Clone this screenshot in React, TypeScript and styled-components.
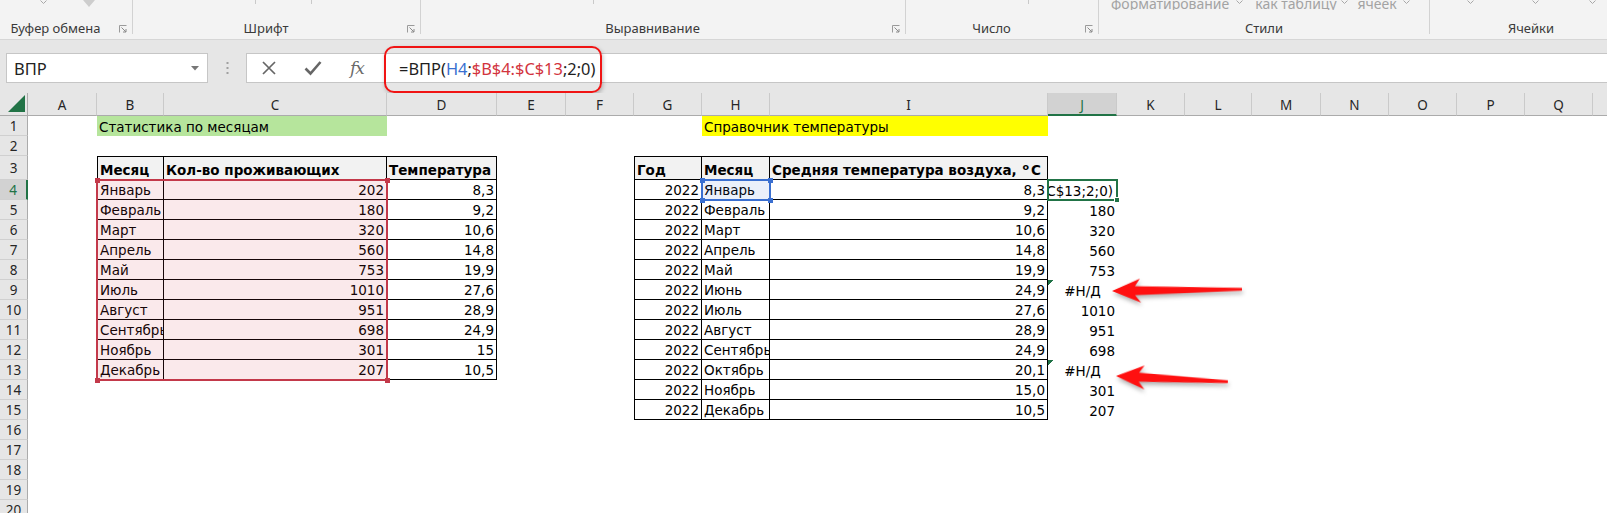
import React from "react";
import styled, { createGlobalStyle, css } from "styled-components";

const UI_FONT = `"Noto Sans", "Open Sans", "DejaVu Sans", sans-serif`;
const CELL_FONT = `"DejaVu Sans", "Noto Sans", sans-serif`;
const GREEN = "#217346";

const COLS = ["A", "B", "C", "D", "E", "F", "G", "H", "I", "J", "K", "L", "M", "N", "O", "P", "Q", "R"];
const COL_W = [69, 67, 223, 110, 69, 68, 68, 68, 278, 69, 68, 67, 69, 68, 68, 68, 68, 68];
const ROW_H = [20, 20, 24, ...Array(17).fill(20)];

const GlobalStyle = createGlobalStyle`
  * { box-sizing: border-box; }
  html, body { margin: 0; padding: 0; background: #ffffff; }
  body { overflow: hidden; font-family: ${UI_FONT}; }
`;

const Page = styled.div`
  width: 1607px;
  height: 513px;
  overflow: hidden;
  display: flex;
  flex-direction: column;
  background: #fff;
`;

/* ---------- Ribbon ---------- */
const Ribbon = styled.div`
  height: 40px;
  flex: none;
  display: flex;
  background: #f3f3f3;
  border-bottom: 1px solid #d6d6d6;
  overflow: hidden;
`;
const Group = styled.div<{ $w: number }>`
  width: ${(p) => p.$w}px;
  flex: none;
  display: flex;
  flex-direction: column;
  justify-content: space-between;
`;
const GroupSep = styled.div`
  width: 1px;
  height: 34px;
  flex: none;
  background: #d2d2d2;
`;
const Fragments = styled.div`
  height: 10px;
  display: flex;
  align-items: flex-start;
  overflow: hidden;
`;
const TopMark = styled.div<{ $ml: number }>`
  margin-left: ${(p) => p.$ml}px;
  width: 1px;
  height: 4px;
  background: #c9c9c9;
  flex: none;
`;
const TopIcon = styled.div<{ $ml: number }>`
  margin-left: ${(p) => p.$ml}px;
  flex: none;
  display: flex;
`;
const TopText = styled.div<{ $ml: number }>`
  margin-left: ${(p) => p.$ml}px;
  align-self: flex-end;
  flex: none;
  font-size: 14px;
  line-height: 12px;
  color: #a3a3a3;
  white-space: nowrap;
`;
const GroupFoot = styled.div`
  height: 19px;
  display: flex;
  align-items: center;
  padding-bottom: 2px;
`;
const GroupLabel = styled.div`
  flex: 1;
  text-align: center;
  font-size: 13px;
  line-height: 17px;
  color: #3a3a3a;
  white-space: nowrap;
`;
const LauncherSlot = styled.div`
  width: 21px;
  flex: none;
  display: flex;
  padding-left: 8px;
`;

const Chevron = () => (
  <svg width="7" height="4" viewBox="0 0 7 4">
    <path d="M0.5 0.5 L3.5 3.5 L6.5 0.5" fill="none" stroke="#a8a8a8" strokeWidth="1" />
  </svg>
);

const Launcher = () => (
  <svg width="8" height="8" viewBox="0 0 8 8">
    <path d="M0.5 7.5V0.5H7.5" fill="none" stroke="#9a9a9a" strokeWidth="1" />
    <path d="M2.5 2.5L7 7M7 4V7H4" fill="none" stroke="#8a8a8a" strokeWidth="1" />
  </svg>
);

/* ---------- Formula bar ---------- */
const FormulaArea = styled.div`
  height: 53px;
  flex: none;
  background: #e6e6e6;
  display: flex;
  align-items: flex-start;
  padding: 13px 0 0 6px;
`;
const NameBox = styled.div`
  width: 202px;
  height: 30px;
  flex: none;
  background: #fff;
  border: 1px solid #c6c6c6;
  display: flex;
  align-items: center;
  justify-content: space-between;
  padding: 0 8px 0 7px;
  font-size: 16.5px;
  color: #222;
`;
const Grip = styled.div`
  width: 38px;
  height: 30px;
  flex: none;
  display: flex;
  align-items: center;
  justify-content: center;
`;
const FormulaBox = styled.div`
  position: relative;
  flex: 1;
  height: 30px;
  background: #fff;
  border: 1px solid #c6c6c6;
  border-right: none;
  display: flex;
  align-items: center;
`;
const BarButton = styled.div`
  width: 44px;
  height: 28px;
  flex: none;
  display: flex;
  align-items: center;
  justify-content: center;
  color: #6a6a6a;
`;
const Fx = styled.span`
  font-family: "DejaVu Serif", "Liberation Serif", serif;
  font-style: italic;
  font-size: 17px;
  color: #6a6a6a;
  letter-spacing: -1px;
`;
const FormulaText = styled.div`
  padding-left: 20px;
  font-size: 16.4px;
  color: #1e1e1e;
  white-space: nowrap;
`;
const Ref = styled.span<{ $c: string }>`
  color: ${(p) => p.$c};
`;
const Callout = styled.div`
  position: absolute;
  left: 137px;
  top: -8px;
  width: 218px;
  height: 47px;
  border: 2.5px solid #f01414;
  border-radius: 10px;
  box-shadow: 1px 2px 4px rgba(0, 0, 0, 0.25);
  pointer-events: none;
`;

/* ---------- Sheet ---------- */
const Sheet = styled.div`
  position: relative;
  flex: 1;
  display: grid;
  grid-template-columns: 28px ${COL_W.map((w) => `${w}px`).join(" ")};
  grid-template-rows: 23px ${ROW_H.map((h) => `${h}px`).join(" ")};
  overflow: hidden;
  background: #fff;
`;
const headBase = css`
  display: flex;
  align-items: center;
  justify-content: center;
  font-family: ${UI_FONT};
  font-size: 13.5px;
  color: #262626;
  background: #e6e6e6;
`;
const Corner = styled.div`
  ${headBase};
  grid-row: 1;
  grid-column: 1;
  border-right: 1px solid #ababab;
  border-bottom: 1px solid #ababab;
  align-items: flex-end;
  justify-content: flex-end;
  padding: 0 2px 3px 0;
`;
const ColHead = styled.div<{ $c: number; $sel?: boolean }>`
  ${headBase};
  grid-row: 1;
  grid-column: ${(p) => p.$c + 2};
  border-right: 1px solid #cacaca;
  border-bottom: 1px solid #ababab;
  padding-top: 2px;
  ${(p) =>
    p.$sel &&
    css`
      background: #d2d2d2;
      color: ${GREEN};
      border-bottom: 2px solid ${GREEN};
    `}
`;
const RowHead = styled.div<{ $r: number; $sel?: boolean }>`
  ${headBase};
  grid-row: ${(p) => p.$r + 1};
  grid-column: 1;
  border-bottom: 1px solid #d0d0d0;
  border-right: 1px solid #ababab;
  ${(p) =>
    p.$sel &&
    css`
      background: #d2d2d2;
      color: ${GREEN};
      border-right: 2px solid ${GREEN};
    `}
`;

type Align = "left" | "right" | "center";
const Cell = styled.div<{
  $r: number;
  $c: number;
  $span?: number;
  $align?: Align;
  $bold?: boolean;
  $fill?: string;
  $box?: boolean;
  $bt?: boolean;
  $bl?: boolean;
  $err?: boolean;
  $padR?: number;
}>`
  grid-row: ${(p) => p.$r + 1};
  grid-column: ${(p) => p.$c + 2} / span ${(p) => p.$span ?? 1};
  display: flex;
  align-items: flex-end;
  justify-content: ${(p) => (p.$align === "right" ? "flex-end" : p.$align === "center" ? "center" : "flex-start")};
  padding: 0 ${(p) => p.$padR ?? 2}px 1px 2px;
  overflow: hidden;
  white-space: nowrap;
  font-family: ${CELL_FONT};
  font-size: 13.5px;
  line-height: 16px;
  font-weight: ${(p) => (p.$bold ? 700 : 400)};
  color: #000;
  background: ${(p) => p.$fill ?? "transparent"};
  ${(p) =>
    p.$box &&
    css`
      border-right: 1px solid #000;
      border-bottom: 1px solid #000;
    `}
  ${(p) => p.$bt && css`border-top: 1px solid #000;`}
  ${(p) => p.$bl && css`border-left: 1px solid #000;`}
  ${(p) =>
    p.$err &&
    css`
      background-image: linear-gradient(135deg, #1e7145 0 4px, transparent 4px);
      background-size: 7px 7px;
      background-repeat: no-repeat;
    `}
`;
const CellText = styled.span`
  flex: none;
  white-space: nowrap;
`;
const Sup = styled.sup`
  font-size: 9.5px;
  vertical-align: 5px;
  line-height: 0;
  margin: 0 2px 0 1px;
`;

const Highlight = styled.div<{ $c1: number; $c2: number; $r1: number; $r2: number; $color: string; $fill: string }>`
  grid-column: ${(p) => p.$c1 + 2} / ${(p) => p.$c2 + 3};
  grid-row: ${(p) => p.$r1 + 1} / ${(p) => p.$r2 + 2};
  margin: -1px;
  position: relative;
  z-index: 2;
  border: 2px solid ${(p) => p.$color};
  background: ${(p) => p.$fill};
  pointer-events: none;
  color: ${(p) => p.$color};
`;
const Handle = styled.div<{ $v: "top" | "bottom"; $h: "left" | "right" }>`
  position: absolute;
  width: 5px;
  height: 5px;
  background: currentColor;
  ${(p) => p.$v}: -3.5px;
  ${(p) => p.$h}: -3.5px;
`;
const ActiveCell = styled.div<{ $c: number; $r: number }>`
  grid-column: ${(p) => p.$c + 2};
  grid-row: ${(p) => p.$r + 1};
  margin: -1px;
  position: relative;
  z-index: 3;
  border: 2px solid ${GREEN};
  pointer-events: none;
`;
const FillHandle = styled.div`
  position: absolute;
  right: -4px;
  bottom: -4px;
  width: 6px;
  height: 6px;
  background: ${GREEN};
  border: 1px solid #fff;
`;
const ArrowSvg = styled.svg<{ $x: number; $y: number; $rot: number }>`
  position: absolute;
  left: ${(p) => p.$x - 1}px;
  top: ${(p) => p.$y - 13}px;
  transform-origin: 1px 13px;
  transform: rotate(${(p) => p.$rot}deg);
  filter: drop-shadow(1px 3px 2px rgba(0, 0, 0, 0.3));
  z-index: 5;
  overflow: visible;
`;

const Arrow = ({ x, y, len, rot }: { x: number; y: number; len: number; rot: number }) => (
  <ArrowSvg $x={x} $y={y} $rot={rot} width={len + 2} height={26} viewBox={`0 0 ${len + 2} 26`}>
    <polygon
      points={`1,13 29,1 24,8.5 ${len},11.6 ${len},14.2 24,17.5 30,25`}
      fill="#ff1010"
    />
  </ArrowSvg>
);

const FORMULA = "=ВПР(H4;$B$4:$C$13;2;0)";

type CellDef = {
  r: number;
  c: number;
  span?: number;
  text: React.ReactNode;
  align?: Align;
  bold?: boolean;
  fill?: string;
  box?: boolean;
  bt?: boolean;
  bl?: boolean;
  err?: boolean;
  padR?: number;
};

function buildCells(): CellDef[] {
  const cells: CellDef[] = [];
  cells.push({ r: 1, c: 1, span: 2, text: "Статистика по месяцам", fill: "#b6e59c" });
  cells.push({ r: 1, c: 7, span: 2, text: "Справочник температуры", fill: "#ffff00" });

  // left table B3:D13
  const head1 = ["Месяц", "Кол-во проживающих", "Температура"];
  head1.forEach((t, i) =>
    cells.push({ r: 3, c: 1 + i, text: t, bold: true, fill: "#f2f2f2", box: true, bt: true, bl: i === 0 })
  );
  const m1 = ["Январь", "Февраль", "Март", "Апрель", "Май", "Июль", "Август", "Сентябрь", "Ноябрь", "Декабрь"];
  const n1 = ["202", "180", "320", "560", "753", "1010", "951", "698", "301", "207"];
  const t1 = ["8,3", "9,2", "10,6", "14,8", "19,9", "27,6", "28,9", "24,9", "15", "10,5"];
  m1.forEach((m, i) => {
    const r = 4 + i;
    cells.push({ r, c: 1, text: m, box: true, bl: true });
    cells.push({ r, c: 2, text: n1[i], align: "right", box: true });
    cells.push({ r, c: 3, text: t1[i], align: "right", box: true });
  });

  // right table G3:I15
  const head2: React.ReactNode[] = [
    "Год",
    "Месяц",
    <>
      Средняя температура воздуха, <Sup>o</Sup>C
    </>,
  ];
  head2.forEach((t, i) =>
    cells.push({ r: 3, c: 6 + i, text: t, bold: true, fill: "#f2f2f2", box: true, bt: true, bl: i === 0 })
  );
  const m2 = ["Январь", "Февраль", "Март", "Апрель", "Май", "Июнь", "Июль", "Август", "Сентябрь", "Октябрь", "Ноябрь", "Декабрь"];
  const t2 = ["8,3", "9,2", "10,6", "14,8", "19,9", "24,9", "27,6", "28,9", "24,9", "20,1", "15,0", "10,5"];
  const j = [FORMULA, "180", "320", "560", "753", "#Н/Д", "1010", "951", "698", "#Н/Д", "301", "207"];
  m2.forEach((m, i) => {
    const r = 4 + i;
    cells.push({ r, c: 6, text: "2022", align: "right", box: true, bl: true });
    cells.push({ r, c: 7, text: m, box: true });
    cells.push({ r, c: 8, text: t2[i], align: "right", box: true });
    const isErr = j[i] === "#Н/Д";
    cells.push({
      r,
      c: 9,
      text: j[i],
      align: isErr ? "center" : "right",
      err: isErr,
      padR: i === 0 ? 4 : 2,
    });
  });
  return cells;
}

const CELLS = buildCells();

export default function App() {
  return (
    <>
      <GlobalStyle />
      <Page>
        <Ribbon>
          <Group $w={132}>
            <Fragments>
              <TopIcon $ml={40}>
                <Chevron />
              </TopIcon>
              <TopIcon $ml={36}>
                <svg width="12" height="7" viewBox="0 0 12 7">
                  <polygon points="0,0 12,0 6,7" fill="#cdcdcd" />
                </svg>
              </TopIcon>
            </Fragments>
            <GroupFoot>
              <GroupLabel>Буфер обмена</GroupLabel>
              <LauncherSlot>
                <Launcher />
              </LauncherSlot>
            </GroupFoot>
          </Group>
          <GroupSep />
          <Group $w={287}>
            <Fragments>
              <TopMark $ml={122} />
              <TopMark $ml={55} />
            </Fragments>
            <GroupFoot>
              <GroupLabel>Шрифт</GroupLabel>
              <LauncherSlot>
                <Launcher />
              </LauncherSlot>
            </GroupFoot>
          </Group>
          <GroupSep />
          <Group $w={484}>
            <Fragments>
              <TopMark $ml={172} />
            </Fragments>
            <GroupFoot>
              <GroupLabel>Выравнивание</GroupLabel>
              <LauncherSlot>
                <Launcher />
              </LauncherSlot>
            </GroupFoot>
          </Group>
          <GroupSep />
          <Group $w={192}>
            <Fragments>
              <TopMark $ml={122} />
            </Fragments>
            <GroupFoot>
              <GroupLabel>Число</GroupLabel>
              <LauncherSlot>
                <Launcher />
              </LauncherSlot>
            </GroupFoot>
          </Group>
          <GroupSep />
          <Group $w={330}>
            <Fragments>
              <TopText $ml={12}>форматирование</TopText>
              <TopIcon $ml={7}>
                <Chevron />
              </TopIcon>
              <TopText $ml={12}>как таблицу</TopText>
              <TopIcon $ml={4}>
                <Chevron />
              </TopIcon>
              <TopText $ml={10}>ячеек</TopText>
              <TopIcon $ml={6}>
                <Chevron />
              </TopIcon>
            </Fragments>
            <GroupFoot>
              <GroupLabel>Стили</GroupLabel>
            </GroupFoot>
          </Group>
          <GroupSep />
          <Group $w={202}>
            <Fragments>
              <TopIcon $ml={37}>
                <Chevron />
              </TopIcon>
              <TopIcon $ml={58}>
                <Chevron />
              </TopIcon>
              <TopIcon $ml={50}>
                <Chevron />
              </TopIcon>
            </Fragments>
            <GroupFoot>
              <GroupLabel>Ячейки</GroupLabel>
            </GroupFoot>
          </Group>
        </Ribbon>

        <FormulaArea>
          <NameBox>
            <span>ВПР</span>
            <svg width="8" height="5" viewBox="0 0 8 5">
              <polygon points="0,0 8,0 4,4.5" fill="#777" />
            </svg>
          </NameBox>
          <Grip>
            <svg width="3" height="14" viewBox="0 0 3 14">
              <rect x="0.5" y="1" width="2" height="2" fill="#a0a0a0" />
              <rect x="0.5" y="6" width="2" height="2" fill="#a0a0a0" />
              <rect x="0.5" y="11" width="2" height="2" fill="#a0a0a0" />
            </svg>
          </Grip>
          <FormulaBox>
            <BarButton>
              <svg width="16" height="16" viewBox="0 0 16 16">
                <path d="M2 2L14 14M14 2L2 14" stroke="#666" strokeWidth="1.7" fill="none" />
              </svg>
            </BarButton>
            <BarButton>
              <svg width="18" height="16" viewBox="0 0 18 16">
                <path d="M1.5 8.5L6.5 13.5L16.5 2" stroke="#666" strokeWidth="2.6" fill="none" />
              </svg>
            </BarButton>
            <BarButton>
              <Fx>fx</Fx>
            </BarButton>
            <FormulaText>
              =ВПР(<Ref $c="#3a6fd0">H4</Ref>;<Ref $c="#d2343e">$B$4:$C$13</Ref>;2;0)
            </FormulaText>
            <Callout />
          </FormulaBox>
        </FormulaArea>

        <Sheet>
          <Corner>
            <svg width="17" height="17" viewBox="0 0 17 17">
              <polygon points="17,0 17,17 0,17" fill={GREEN} />
            </svg>
          </Corner>
          {COLS.map((c, i) => (
            <ColHead key={c} $c={i} $sel={c === "J"}>
              {c}
            </ColHead>
          ))}
          {ROW_H.map((_, i) => (
            <RowHead key={i} $r={i + 1} $sel={i + 1 === 4}>
              {i + 1}
            </RowHead>
          ))}
          {CELLS.map((d, i) => (
            <Cell
              key={i}
              $r={d.r}
              $c={d.c}
              $span={d.span}
              $align={d.align}
              $bold={d.bold}
              $fill={d.fill}
              $box={d.box}
              $bt={d.bt}
              $bl={d.bl}
              $err={d.err}
              $padR={d.padR}
            >
              <CellText>{d.text}</CellText>
            </Cell>
          ))}
          <Highlight $c1={1} $c2={2} $r1={4} $r2={13} $color="#c3394a" $fill="rgba(214, 52, 72, 0.11)">
            <Handle $v="top" $h="left" />
            <Handle $v="top" $h="right" />
            <Handle $v="bottom" $h="left" />
            <Handle $v="bottom" $h="right" />
          </Highlight>
          <Highlight $c1={7} $c2={7} $r1={4} $r2={4} $color="#3a6fd0" $fill="rgba(58, 111, 208, 0.1)">
            <Handle $v="top" $h="left" />
            <Handle $v="top" $h="right" />
            <Handle $v="bottom" $h="left" />
            <Handle $v="bottom" $h="right" />
          </Highlight>
          <ActiveCell $c={9} $r={4}>
            <FillHandle />
          </ActiveCell>
          <Arrow x={1112} y={198} len={131} rot={-0.7} />
          <Arrow x={1116} y={283} len={113} rot={3} />
        </Sheet>
      </Page>
    </>
  );
}
